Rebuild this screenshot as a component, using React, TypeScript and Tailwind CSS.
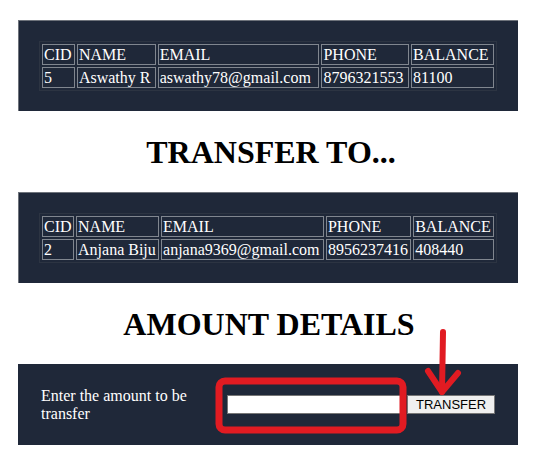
import React from "react";

type Row = { cid: string; name: string; email: string; phone: string; balance: string };

const headers = ["CID", "NAME", "EMAIL", "PHONE", "BALANCE"];

function CustomerTable({ row }: { row: Row }) {
  const cell = "border border-[#80868f] px-px py-0 text-left font-normal align-middle whitespace-nowrap";
  return (
    <table className="w-full border-separate border-spacing-[2px] border border-[#2c3442] text-[16px] leading-[19px] text-white">
      <tbody>
        <tr>
          {headers.map((h) => (
            <th key={h} className={cell}>
              {h}
            </th>
          ))}
        </tr>
        <tr>
          <td className={cell}>{row.cid}</td>
          <td className={cell}>{row.name}</td>
          <td className={cell}>{row.email}</td>
          <td className={cell}>{row.phone}</td>
          <td className={cell}>{row.balance}</td>
        </tr>
      </tbody>
    </table>
  );
}

export default function App() {
  return (
    <main
      className="relative h-[463px] w-[552px] overflow-hidden bg-white pl-[18px] pt-[20px]"
      style={{ fontFamily: '"Liberation Serif", "Times New Roman", serif' }}
    >
      <div className="flex w-[500px] flex-col">
        {/* sender */}
        <div className="flex h-[91px] items-center border-l border-t border-[#6e737b] bg-[#1f2839] pl-[20px] pr-[21px]">
          <CustomerTable
            row={{ cid: "5", name: "Aswathy R", email: "aswathy78@gmail.com", phone: "8796321553", balance: "81100" }}
          />
        </div>

        <h1 className="flex h-[81px] items-center justify-center pl-[6px] text-[32px] font-bold text-black">
          TRANSFER TO...
        </h1>

        {/* receiver */}
        <div className="flex h-[91px] items-center border-l border-t border-[#6e737b] bg-[#1f2839] pl-[20px] pr-[21px]">
          <CustomerTable
            row={{ cid: "2", name: "Anjana Biju", email: "anjana9369@gmail.com", phone: "8956237416", balance: "408440" }}
          />
        </div>

        <h1 className="flex h-[81px] items-center justify-center pl-[2px] text-[32px] font-bold text-black">
          AMOUNT DETAILS
        </h1>

        {/* amount */}
        <div className="flex h-[81px] items-center bg-[#1f2839] pl-[23px]">
          <div className="w-[186px] pt-[1px] text-[16px] leading-[18px] text-white">
            Enter the amount to be transfer
          </div>
          <input
            type="text"
            className="h-[19px] w-[178px] border border-[#767676] bg-white px-1 text-[13px] outline-none"
          />
          <button
            className="ml-[2px] h-[19px] border border-[#767676] bg-[#efefef] px-[8px] text-[13px] leading-[17px] text-black"
            style={{ fontFamily: '"Liberation Sans", Arial, sans-serif' }}
          >
            TRANSFER
          </button>
        </div>
      </div>

      {/* red annotation */}
      <svg className="pointer-events-none absolute left-0 top-0" width="552" height="463" viewBox="0 0 552 463">
        <rect x="219" y="381" width="184" height="49" rx="6" fill="none" stroke="#e11b22" strokeWidth="7" />
        <path d="M443 332 L442 392" fill="none" stroke="#e11b22" strokeWidth="6" strokeLinecap="round" />
        <path d="M428 371 L442 392 L458 373" fill="none" stroke="#e11b22" strokeWidth="6" strokeLinecap="round" strokeLinejoin="round" />
      </svg>
    </main>
  );
}
